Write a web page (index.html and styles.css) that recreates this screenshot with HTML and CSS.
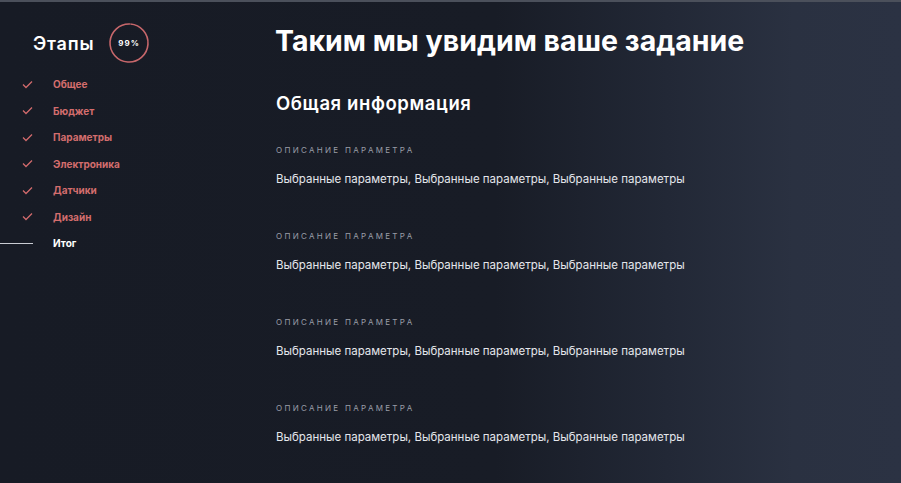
FILE: index.html
```html
<!DOCTYPE html>
<html lang="ru">
<head>
    <meta charset="UTF-8">
    <meta name="viewport" content="width=device-width, initial-scale=1.0">
    <title>Итог</title>
    <link rel="stylesheet" href="styles.css">
</head>
<body>
    <div class="page">
        <aside class="steps">
            <div class="steps-head">
                <h2>Этапы</h2>
                <div class="progress">
                    <svg width="42" height="42" viewBox="0 0 42 42">
                        <circle cx="21" cy="21" r="19" fill="none" stroke="#c7676b" stroke-width="1.6"
                                stroke-dasharray="118.2 119.4" transform="rotate(-86 21 21)"/>
                    </svg>
                    <span>99%</span>
                </div>
            </div>
            <ul class="step-list">
                <li><span class="mark"><svg width="11" height="9" viewBox="0 0 11 9"><polyline points="1,4.5 4,7.5 10,1.5" fill="none" stroke="#d06a6c" stroke-width="1.3"/></svg></span>Общее</li>
                <li><span class="mark"><svg width="11" height="9" viewBox="0 0 11 9"><polyline points="1,4.5 4,7.5 10,1.5" fill="none" stroke="#d06a6c" stroke-width="1.3"/></svg></span>Бюджет</li>
                <li><span class="mark"><svg width="11" height="9" viewBox="0 0 11 9"><polyline points="1,4.5 4,7.5 10,1.5" fill="none" stroke="#d06a6c" stroke-width="1.3"/></svg></span>Параметры</li>
                <li><span class="mark"><svg width="11" height="9" viewBox="0 0 11 9"><polyline points="1,4.5 4,7.5 10,1.5" fill="none" stroke="#d06a6c" stroke-width="1.3"/></svg></span>Электроника</li>
                <li><span class="mark"><svg width="11" height="9" viewBox="0 0 11 9"><polyline points="1,4.5 4,7.5 10,1.5" fill="none" stroke="#d06a6c" stroke-width="1.3"/></svg></span>Датчики</li>
                <li><span class="mark"><svg width="11" height="9" viewBox="0 0 11 9"><polyline points="1,4.5 4,7.5 10,1.5" fill="none" stroke="#d06a6c" stroke-width="1.3"/></svg></span>Дизайн</li>
                <li class="current"><span class="mark line"></span>Итог</li>
            </ul>
        </aside>
        <main class="summary">
            <h1>Таким мы увидим ваше задание</h1>
            <h3>Общая информация</h3>
            <div class="param">
                <div class="param-label">Описание параметра</div>
                <div class="param-value">Выбранные параметры, Выбранные параметры, Выбранные параметры</div>
            </div>
            <div class="param">
                <div class="param-label">Описание параметра</div>
                <div class="param-value">Выбранные параметры, Выбранные параметры, Выбранные параметры</div>
            </div>
            <div class="param">
                <div class="param-label">Описание параметра</div>
                <div class="param-value">Выбранные параметры, Выбранные параметры, Выбранные параметры</div>
            </div>
            <div class="param">
                <div class="param-label">Описание параметра</div>
                <div class="param-value">Выбранные параметры, Выбранные параметры, Выбранные параметры</div>
            </div>
        </main>
    </div>
</body>
</html>
```

FILE: styles.css
```css
html, body {
    height: 100%;
}
body {
    font-family: Inter, "Noto Sans", sans-serif;
    margin: 0;
    padding: 0;
    background-color: #171b25;
    color: #fff;
    overflow: hidden;
}
.page {
    display: flex;
    height: 100%;
    border-top: 2px solid #4b505b;
    box-sizing: border-box;
    background: linear-gradient(90deg, #171b25 0%, #181c26 55%, #222836 74%, #2a3141 88%, #2b3243 100%);
}
.steps {
    width: 275px;
    flex-shrink: 0;
}
.steps-head {
    display: flex;
    align-items: center;
    padding: 20px 0 0 33px;
}
.steps-head h2 {
    margin: 0;
    font-size: 18px;
    font-weight: 600;
    letter-spacing: 0.8px;
    width: 75px;
}
.progress {
    position: relative;
    width: 42px;
    height: 42px;
    display: flex;
    align-items: center;
    justify-content: center;
}
.progress svg {
    position: absolute;
    left: 0;
    top: 0;
}
.progress span {
    font-size: 8px;
    font-weight: 700;
    letter-spacing: 1px;
}
.step-list {
    list-style: none;
    margin: 7px 0 0;
    padding: 0;
}
.step-list li {
    display: flex;
    align-items: center;
    height: 26.5px;
    font-size: 10px;
    font-weight: 700;
    color: #d36d6d;
}
.step-list .mark {
    width: 53px;
    padding-left: 22px;
    box-sizing: border-box;
    display: flex;
    align-items: center;
}
.step-list .current {
    color: #fff;
}
.step-list .mark.line {
    padding: 0;
}
.step-list .mark.line::before {
    content: "";
    width: 33px;
    height: 1px;
    background: #c9ccd3;
}
.summary {
    flex: 1;
    padding-top: 22px;
}
.summary h1 {
    margin: 0;
    font-size: 28.5px;
    font-weight: 700;
    line-height: 34px;
}
.summary h3 {
    margin: 33px 0 0;
    font-size: 18.5px;
    font-weight: 600;
    letter-spacing: 0.6px;
    line-height: 24px;
    padding-left: 1px;
}
.param {
    padding-left: 1px;
    height: 86px;
}
.param:first-of-type {
    margin-top: 29px;
}
.param-label {
    font-size: 8px;
    letter-spacing: 2.3px;
    text-transform: uppercase;
    color: #9a9ea8;
    line-height: 12px;
}
.param-value {
    margin-top: 15px;
    font-size: 11.5px;
    color: #e4e6eb;
    line-height: 16px;
}
```
